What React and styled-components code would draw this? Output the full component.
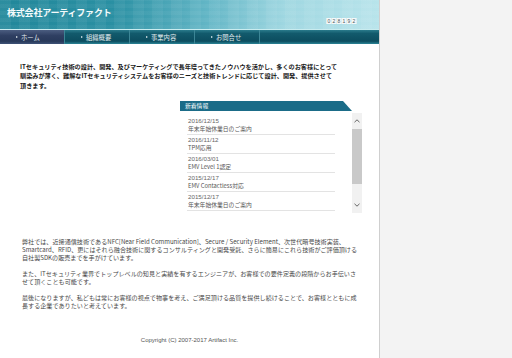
import React from "react";
import styled, { createGlobalStyle } from "styled-components";

const Global = createGlobalStyle`
  html, body { margin: 0; padding: 0; }
  body {
    font-family: "Noto Sans CJK JP", "Noto Sans", sans-serif;
    background: #f3f3f3;
  }
`;

const Page = styled.div`
  display: flex;
  min-height: 358px;
`;

const Main = styled.div`
  width: 379px;
  background: #fff;
  border-right: 1px solid #cfcfcf;
  display: flex;
  flex-direction: column;
`;

const Side = styled.div`
  flex: 1;
  background: #f3f3f3;
`;

const Header = styled.header`
  height: 30px;
  box-sizing: border-box;
  display: flex;
  justify-content: space-between;
  align-items: flex-start;
  padding: 0 22px 0 7px;
  border-bottom: 1px solid #c9ecef;
  background:
    repeating-linear-gradient(90deg, rgba(255,255,255,0.05) 0 11px, rgba(0,0,0,0) 11px 19px),
    repeating-linear-gradient(0deg, rgba(255,255,255,0.04) 0 4px, rgba(0,0,0,0) 4px 7px),
    linear-gradient(90deg, #21879a 0%, #2a90a3 30%, #63b6c6 55%, #9fd7e1 75%, #b8e4eb 100%);
`;

const Title = styled.h1`
  margin: 8px 0 0;
  font-size: 9px;
  line-height: 10px;
  font-weight: bold;
  color: #f4fbfc;
  letter-spacing: -0.2px;
`;

const Counter = styled.div`
  margin-top: 18px;
  display: flex;
  gap: 1px;
  padding: 0 1px;
  background: #dfeef1;
`;

const Digit = styled.span`
  width: 4px;
  height: 6px;
  font-family: "Liberation Sans", sans-serif;
  font-size: 5px;
  line-height: 6px;
  text-align: center;
  color: #4a5a60;
  background: #f4f8f9;
`;

const Nav = styled.nav`
  height: 14px;
  box-sizing: border-box;
  display: flex;
  background: linear-gradient(180deg, #2a7b8c 0%, #125a6c 25%, #0c4d5f 80%, #2b8597 100%);
`;

const NavItem = styled.a`
  width: 65px;
  box-sizing: border-box;
  display: flex;
  align-items: center;
  padding-left: 16px;
  gap: 3px;
  font-size: 6.3px;
  color: #e4eef0;
  text-decoration: none;
  border-right: 1px solid #3c8696;
  background: ${p => p.$active ? "linear-gradient(180deg, #4b5d80 0%, #2f3f62 40%, #28395a 80%, #3e5277 100%)" : "transparent"};
`;

const Arrow = styled.span`
  width: 0;
  height: 0;
  border-top: 1.5px solid transparent;
  border-bottom: 1.5px solid transparent;
  border-left: 2px solid #e4eef0;
`;

const Intro = styled.p`
  margin: 18px 0 0 20px;
  font-size: 6.15px;
  line-height: 9.3px;
  font-weight: bold;
  color: #1a1a1a;
  white-space: nowrap;
`;

const News = styled.section`
  margin: 11px 0 0 180px;
  width: 182px;
`;

const NewsHead = styled.h2`
  margin: 0;
  width: 172px;
  height: 10px;
  padding-left: 5px;
  box-sizing: border-box;
  font-size: 5.8px;
  line-height: 10px;
  font-weight: normal;
  color: #fff;
  background: #1b6c88;
  clip-path: polygon(0 0, calc(100% - 9px) 0, 100% 100%, 0 100%);
`;

const NewsBody = styled.div`
  margin-top: 2px;
  height: 100px;
  display: flex;
`;

const NewsList = styled.ul`
  flex: 1;
  list-style: none;
  margin: 0;
  padding: 3px 0 0;
  overflow: hidden;
`;

const NewsItem = styled.li`
  margin: 0 17px 0 7px;
  padding: 1px 0 1px 1px;
  border-bottom: 1px solid #e3e3e3;
  font-size: 5.8px;
  line-height: 8px;
  color: #555;
`;

const DateLine = styled.div`
  font-family: "Liberation Sans", sans-serif;
  font-size: 6.2px;
  color: #666;
`;

const Scrollbar = styled.div`
  width: 10px;
  display: flex;
  flex-direction: column;
  background: #f1f1f1;
`;

const ScrollBtn = styled.div`
  height: 16px;
  display: flex;
  align-items: center;
  justify-content: center;
  margin-top: ${p => p.$down ? "auto" : "0"};
`;

const Thumb = styled.div`
  height: 55px;
  background: #c9c9c9;
`;

const Body = styled.section`
  margin: 25px 0 0 22px;
`;

const Para = styled.p`
  margin: 0 0 8px;
  font-size: 6.1px;
  line-height: 8px;
  color: #474747;
  white-space: nowrap;
`;

const Footer = styled.footer`
  margin-top: 18px;
  text-align: center;
  font-family: "Liberation Sans", sans-serif;
  font-size: 6px;
  line-height: 8px;
  color: #555;
`;

const Chevron = ({ down }) => (
  <svg width="6" height="4" viewBox="0 0 6 4">
    <path d={down ? "M0.5 0.8 L3 3.2 L5.5 0.8" : "M0.5 3.2 L3 0.8 L5.5 3.2"} fill="none" stroke="#555" strokeWidth="0.9" />
  </svg>
);

const news = [
  ["2016/12/15", "年末年始休業日のご案内"],
  ["2016/11/12", "TPM応用"],
  ["2016/03/01", "EMV Level 1認定"],
  ["2015/12/17", "EMV Contactless対応"],
  ["2015/12/17", "年末年始休業日のご案内"],
];

const navs = ["ホーム", "組織概要", "事業内容", "お問合せ"];

export default function App() {
  return (
    <>
      <Global />
      <Page>
        <Main>
          <Header>
            <Title>株式会社アーティファクト</Title>
            <Counter>
              {"028192".split("").map((d, i) => <Digit key={i}>{d}</Digit>)}
            </Counter>
          </Header>
          <Nav>
            {navs.map((n, i) => (
              <NavItem key={n} $active={i === 0} href="#">
                <Arrow />
                {n}
              </NavItem>
            ))}
          </Nav>
          <Intro>
            ITセキュリティ技術の設計、開発、及びマーケティングで長年培ってきたノウハウを活かし、多くのお客様にとって<br />
            馴染みが薄く、難解なITセキュリティシステムをお客様のニーズと技術トレンドに応じて設計、開発、提供させて<br />
            頂きます。
          </Intro>
          <News>
            <NewsHead>新着情報</NewsHead>
            <NewsBody>
              <NewsList>
                {news.map(([d, t], i) => (
                  <NewsItem key={i}>
                    <DateLine>{d}</DateLine>
                    <div>{t}</div>
                  </NewsItem>
                ))}
              </NewsList>
              <Scrollbar>
                <ScrollBtn><Chevron /></ScrollBtn>
                <Thumb />
                <ScrollBtn $down><Chevron down /></ScrollBtn>
              </Scrollbar>
            </NewsBody>
          </News>
          <Body>
            <Para>
              弊社では、近接通信技術であるNFC[Near Field Communication]、Secure / Security Element、次世代暗号技術実装、<br />
              Smartcard、RFID、更にはそれら融合技術に関するコンサルティングと開発受託、さらに簡易にこれら技術がご評価頂ける<br />
              自社製SDKの販売までを手がけています。
            </Para>
            <Para>
              また、ITセキュリティ業界でトップレベルの知見と実績を有するエンジニアが、お客様での要件定義の段階からお手伝いさ<br />
              せて頂くことも可能です。
            </Para>
            <Para>
              最後になりますが、私どもは常にお客様の視点で物事を考え、ご満足頂ける品質を提供し続けることで、お客様とともに成<br />
              長する企業でありたいと考えています。
            </Para>
          </Body>
          <Footer>Copyright (C) 2007-2017 Artifact Inc.</Footer>
        </Main>
        <Side />
      </Page>
    </>
  );
}
